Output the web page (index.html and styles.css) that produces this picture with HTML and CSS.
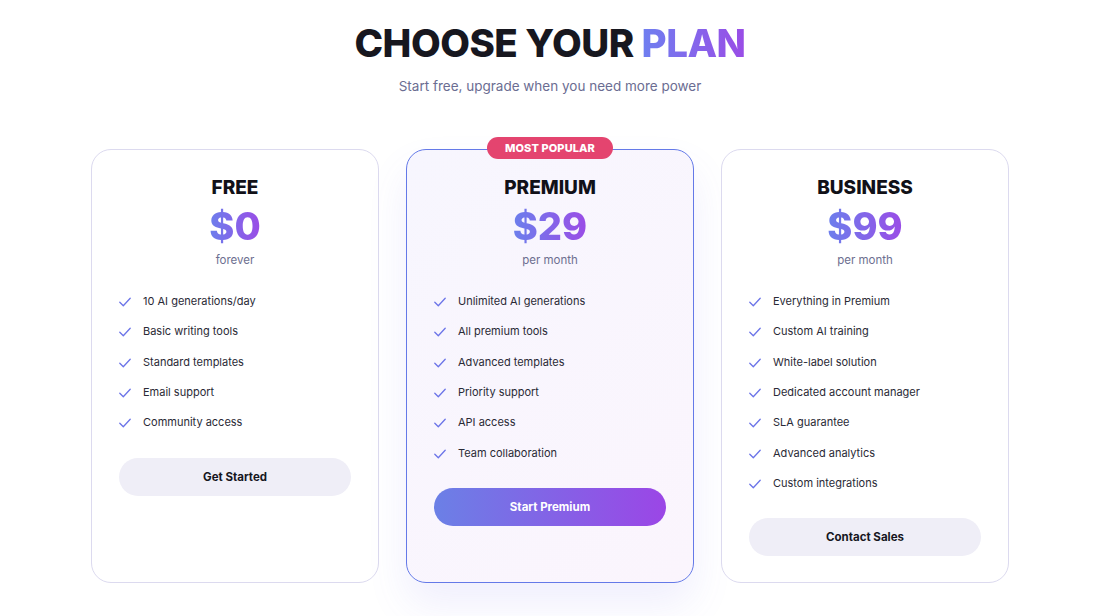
FILE: index.html
```html
<!DOCTYPE html>
<html lang="en">
<head>
<meta charset="utf-8">
<title>Choose your plan</title>
<link rel="stylesheet" href="styles.css">
</head>
<body>
<main class="page">
  <header class="hero">
    <h1 class="title">CHOOSE YOUR <span class="accent">PLAN</span></h1>
    <p class="subtitle">Start free, upgrade when you need more power</p>
  </header>

  <section class="plans">
    <article class="card">
      <h2 class="plan-name">FREE</h2>
      <div class="price">$0</div>
      <div class="period">forever</div>
      <ul class="features">
        <li><svg class="check" viewBox="0 0 12 10"><path d="M0.8 5.2 L4.3 8.7 L11.2 1.3"/></svg>10 AI generations/day</li>
        <li><svg class="check" viewBox="0 0 12 10"><path d="M0.8 5.2 L4.3 8.7 L11.2 1.3"/></svg>Basic writing tools</li>
        <li><svg class="check" viewBox="0 0 12 10"><path d="M0.8 5.2 L4.3 8.7 L11.2 1.3"/></svg>Standard templates</li>
        <li><svg class="check" viewBox="0 0 12 10"><path d="M0.8 5.2 L4.3 8.7 L11.2 1.3"/></svg>Email support</li>
        <li><svg class="check" viewBox="0 0 12 10"><path d="M0.8 5.2 L4.3 8.7 L11.2 1.3"/></svg>Community access</li>
      </ul>
      <button class="btn">Get Started</button>
    </article>

    <article class="card card-featured">
      <span class="badge">MOST POPULAR</span>
      <h2 class="plan-name">PREMIUM</h2>
      <div class="price">$29</div>
      <div class="period">per month</div>
      <ul class="features">
        <li><svg class="check" viewBox="0 0 12 10"><path d="M0.8 5.2 L4.3 8.7 L11.2 1.3"/></svg>Unlimited AI generations</li>
        <li><svg class="check" viewBox="0 0 12 10"><path d="M0.8 5.2 L4.3 8.7 L11.2 1.3"/></svg>All premium tools</li>
        <li><svg class="check" viewBox="0 0 12 10"><path d="M0.8 5.2 L4.3 8.7 L11.2 1.3"/></svg>Advanced templates</li>
        <li><svg class="check" viewBox="0 0 12 10"><path d="M0.8 5.2 L4.3 8.7 L11.2 1.3"/></svg>Priority support</li>
        <li><svg class="check" viewBox="0 0 12 10"><path d="M0.8 5.2 L4.3 8.7 L11.2 1.3"/></svg>API access</li>
        <li><svg class="check" viewBox="0 0 12 10"><path d="M0.8 5.2 L4.3 8.7 L11.2 1.3"/></svg>Team collaboration</li>
      </ul>
      <button class="btn btn-primary">Start Premium</button>
    </article>

    <article class="card">
      <h2 class="plan-name">BUSINESS</h2>
      <div class="price">$99</div>
      <div class="period">per month</div>
      <ul class="features">
        <li><svg class="check" viewBox="0 0 12 10"><path d="M0.8 5.2 L4.3 8.7 L11.2 1.3"/></svg>Everything in Premium</li>
        <li><svg class="check" viewBox="0 0 12 10"><path d="M0.8 5.2 L4.3 8.7 L11.2 1.3"/></svg>Custom AI training</li>
        <li><svg class="check" viewBox="0 0 12 10"><path d="M0.8 5.2 L4.3 8.7 L11.2 1.3"/></svg>White-label solution</li>
        <li><svg class="check" viewBox="0 0 12 10"><path d="M0.8 5.2 L4.3 8.7 L11.2 1.3"/></svg>Dedicated account manager</li>
        <li><svg class="check" viewBox="0 0 12 10"><path d="M0.8 5.2 L4.3 8.7 L11.2 1.3"/></svg>SLA guarantee</li>
        <li><svg class="check" viewBox="0 0 12 10"><path d="M0.8 5.2 L4.3 8.7 L11.2 1.3"/></svg>Advanced analytics</li>
        <li><svg class="check" viewBox="0 0 12 10"><path d="M0.8 5.2 L4.3 8.7 L11.2 1.3"/></svg>Custom integrations</li>
      </ul>
      <button class="btn">Contact Sales</button>
    </article>
  </section>
</main>
</body>
</html>
```

FILE: styles.css
```css
* { box-sizing: border-box; }

html, body {
  margin: 0;
  padding: 0;
  background: #ffffff;
}

body {
  font-family: Inter, "Noto Sans", "Liberation Sans", sans-serif;
  color: #1b1b2b;
  height: 616px;
  overflow: hidden;
}

.page {
  display: flex;
  flex-direction: column;
  align-items: center;
}

.hero {
  text-align: center;
  padding-top: 18px;
}

.title {
  margin: 0;
  font-size: 38.5px;
  line-height: 50px;
  font-weight: 800;
  letter-spacing: -0.5px;
  color: #17171f;
}

.accent {
  background: linear-gradient(90deg, #6f7ff0 0%, #9a4ce6 100%);
  -webkit-background-clip: text;
  background-clip: text;
  color: transparent;
}

.subtitle {
  margin: 8px 0 0;
  font-size: 13.5px;
  line-height: 20px;
  color: #6b6d92;
}

.plans {
  margin-top: 53px;
  display: grid;
  grid-template-columns: repeat(3, 288px);
  gap: 27px;
  align-items: stretch;
}

.card {
  position: relative;
  display: flex;
  flex-direction: column;
  align-items: stretch;
  padding: 26px 27px 26px;
  border: 1.5px solid #dcdaef;
  border-radius: 20px;
  background: #ffffff;
  text-align: center;
}

.card-featured {
  border-color: #6479e8;
  background: linear-gradient(135deg, #f7f6fe 0%, #fbf5fd 100%);
  box-shadow: 0 22px 40px rgba(110, 100, 235, 0.10);
}

.badge {
  position: absolute;
  top: -13px;
  left: 50%;
  transform: translateX(-50%);
  height: 22px;
  padding: 0 18px;
  border-radius: 11px;
  background: #e4446f;
  color: #ffffff;
  font-size: 11px;
  font-weight: 800;
  line-height: 22px;
  letter-spacing: 0.1px;
  white-space: nowrap;
}

.plan-name {
  margin: 0;
  font-size: 19px;
  line-height: 24px;
  font-weight: 800;
  color: #111118;
}

.price {
  margin-top: 4px;
  font-size: 38px;
  line-height: 44px;
  font-weight: 800;
  background: linear-gradient(90deg, #6c7fec 0%, #9a4ce6 100%);
  -webkit-background-clip: text;
  background-clip: text;
  color: transparent;
  align-self: center;
}

.period {
  margin-top: 4px;
  font-size: 11.5px;
  line-height: 16px;
  color: #6d6f90;
}

.features {
  list-style: none;
  margin: 18px 0 0;
  padding: 0;
  text-align: left;
}

.features li {
  display: flex;
  align-items: center;
  height: 30.33px;
  font-size: 11px;
  color: #2a2a36;
}

.check {
  width: 12px;
  height: 10px;
  margin-right: 12px;
  flex: none;
  fill: none;
  stroke: #6b74e8;
  stroke-width: 1.3;
  stroke-linecap: round;
  stroke-linejoin: round;
  position: relative;
  top: 1px;
}

.btn {
  margin-top: 20px;
  height: 38px;
  border: none;
  border-radius: 19px;
  background: #efeef7;
  color: #16161e;
  font-family: inherit;
  font-size: 11.5px;
  font-weight: 700;
  cursor: pointer;
}

.btn-primary {
  background: linear-gradient(90deg, #6b80e6 0%, #9b46e6 100%);
  color: #ffffff;
}
```
